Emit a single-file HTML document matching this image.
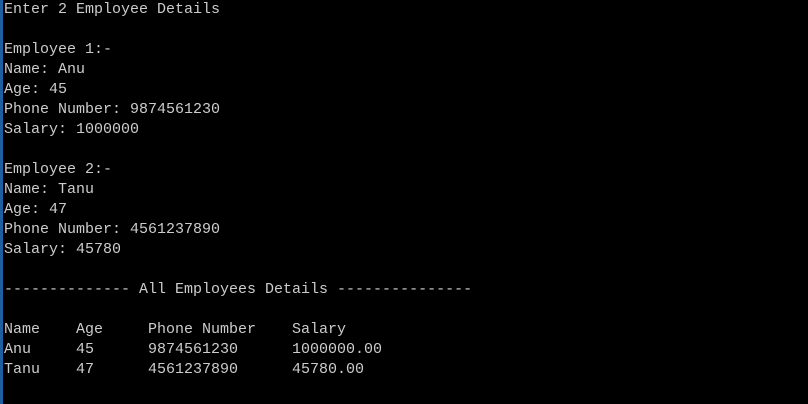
<!DOCTYPE html>
<html><head><style>
html,body{margin:0;padding:0;background:#000;width:808px;height:404px;overflow:hidden}
.bar{position:absolute;left:0;top:0;width:3px;height:404px;background:#1f5f9f}
pre{position:absolute;left:4px;top:0;margin:0;font-family:"Liberation Mono",monospace;font-size:15px;line-height:20px;color:#cccccc}
</style></head><body>
<div class="bar"></div>
<pre>Enter 2 Employee Details

Employee 1:-
Name: Anu
Age: 45
Phone Number: 9874561230
Salary: 1000000

Employee 2:-
Name: Tanu
Age: 47
Phone Number: 4561237890
Salary: 45780

-------------- All Employees Details ---------------

Name    Age     Phone Number    Salary
Anu     45      9874561230      1000000.00
Tanu    47      4561237890      45780.00</pre>
</body></html>
